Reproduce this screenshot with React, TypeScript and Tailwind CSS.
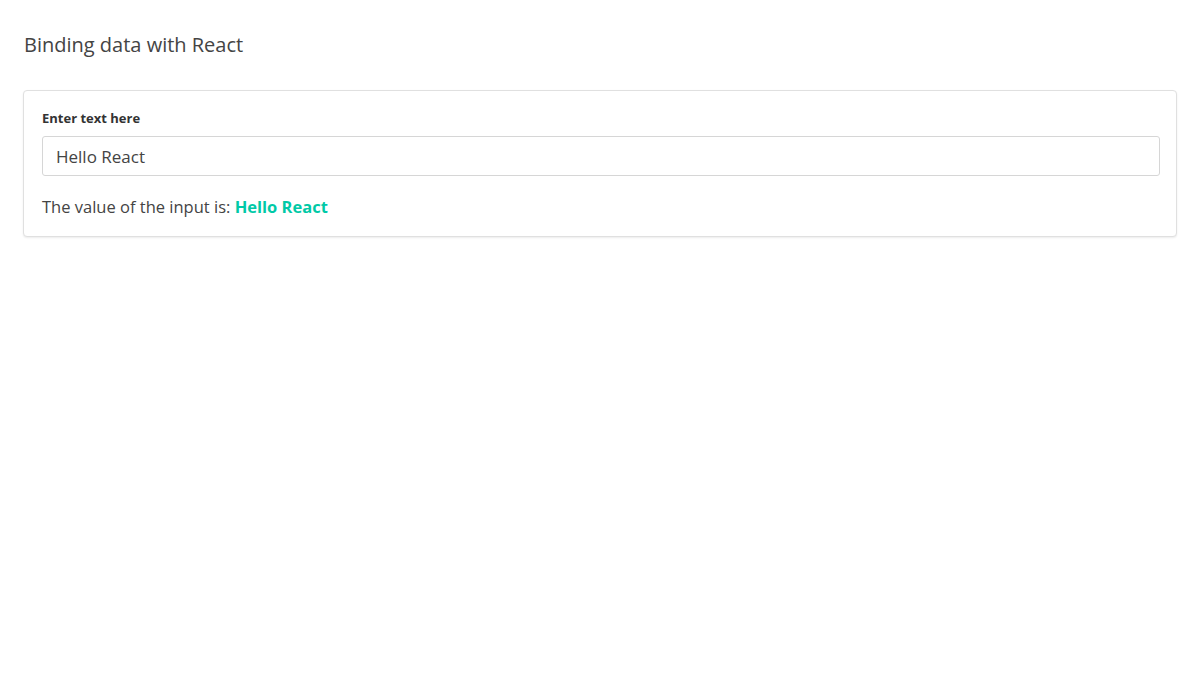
import React, { useState } from "react";

export default function App() {
  const [text, setText] = useState("Hello React");

  return (
    <div
      className="min-h-screen bg-white pl-[23px] pr-[23px] pt-[30px] text-[#444]"
      style={{ fontFamily: '"Segoe UI", "Open Sans", "Noto Sans", sans-serif' }}
    >
      <h1 className="pl-px text-[20px] leading-[30px] font-normal text-[#444]">
        Binding data with React
      </h1>

      <div className="mt-[30px] rounded-[4px] border border-[#e0e0e0] bg-white pl-[18px] pr-[16px] pt-[17px] pb-[16px] shadow-[0_1px_2px_rgba(0,0,0,0.08)]">
        <label className="block text-[13px] leading-[20px] font-bold text-[#333]">
          Enter text here
        </label>
        <input
          type="text"
          value={text}
          onChange={(e) => setText(e.target.value)}
          className="mt-[8px] block h-[40px] w-full rounded-[3px] border border-[#d6d6d6] px-[13px] text-[17px] text-[#444] outline-none"
        />
        <p className="mt-[18px] text-[16.5px] leading-[26px] text-[#444]">
          The value of the input is:{" "}
          <span className="font-bold text-[#00c9a7]">{text}</span>
        </p>
      </div>
    </div>
  );
}
